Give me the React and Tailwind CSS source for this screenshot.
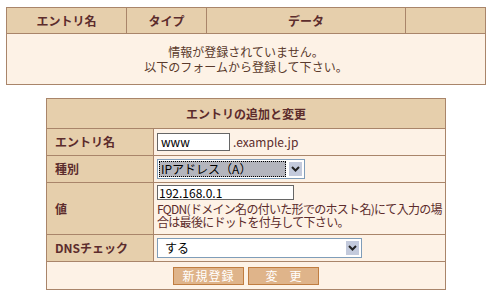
import React from "react";

const font = { fontFamily: '"Noto Sans CJK JP", "Liberation Sans", sans-serif' };

function Chevron() {
  return (
    <svg width="9" height="6" viewBox="0 0 9 6">
      <path d="M1 1 L4.5 4.5 L8 1" fill="none" stroke="#222" strokeWidth="2" />
    </svg>
  );
}

function SelectBox({ width, children, focused }) {
  return (
    <div
      className="flex h-[20px] items-stretch border border-[#7f9db9] bg-white"
      style={{ width }}
    >
      <div className="flex flex-1 items-center p-[1px]">
        {focused ? (
          <div className="flex h-full w-full items-center border border-dotted border-black bg-[#b4b5bd] pl-[1px] text-[12px] leading-none text-black">
            {children}
          </div>
        ) : (
          <div className="flex h-full w-full items-center pl-[6px] text-[12px] leading-none text-black">
            {children}
          </div>
        )}
      </div>
      <div className="m-[1px] flex w-[15px] items-center justify-center border border-white bg-[#c3cadc]">
        <Chevron />
      </div>
    </div>
  );
}

function Row({ label, height, children }) {
  return (
    <div className="flex border-b border-[#a9856a]" style={{ height }}>
      <div className="flex w-[107px] items-center border-r border-[#a9856a] bg-[#e6cfac] pl-[8px] text-[12px] font-bold text-[#5c2c2c]">
        {label}
      </div>
      <div className="flex-1 bg-[#fdf2e6]">{children}</div>
    </div>
  );
}

export default function App() {
  return (
    <div className="w-[495px] h-[300px] bg-white" style={font}>
      <div className="h-[7px]" />
      {/* Top list table */}
      <div className="ml-[6px] w-[480px] border border-[#a9856a]">
        <div className="flex h-[26px] border-b border-[#a9856a] bg-[#e6cfac] text-[12px] font-bold text-[#5c2c2c]">
          <div className="flex w-[120px] items-center justify-center border-r border-[#a9856a]">エントリ名</div>
          <div className="flex w-[80px] items-center justify-center border-r border-[#a9856a]">タイプ</div>
          <div className="flex w-[199px] items-center justify-center border-r border-[#a9856a]">データ</div>
          <div className="flex-1" />
        </div>
        <div className="flex h-[50px] flex-col items-center justify-center bg-[#fdf2e6] text-[12px] leading-[15px] text-[#5a3a2c]">
          <div>情報が登録されていません。</div>
          <div>以下のフォームから登録して下さい。</div>
        </div>
      </div>

      <div className="h-[13px]" />

      {/* Form table */}
      <div className="ml-[46px] w-[400px] border border-[#a9856a]">
        <div className="flex h-[30px] items-center justify-center border-b border-[#a9856a] bg-[#e6cfac] text-[12px] font-bold text-[#5c2c2c]">
          エントリの追加と変更
        </div>
        <Row label="エントリ名" height={27}>
          <div className="flex h-full items-center pl-[3px]">
            <div className="flex h-[18px] w-[73px] items-center border border-[#666] bg-white pl-[3px] text-[12px] leading-none text-black">
              www
            </div>
            <span className="ml-[3px] text-[12px] text-[#5c2c2c]">.example.jp</span>
          </div>
        </Row>
        <Row label="種別" height={27}>
          <div className="flex h-full items-center pl-[3px]">
            <SelectBox width={148} focused>
              IPアドレス（A）
            </SelectBox>
          </div>
        </Row>
        <Row label="値" height={52}>
          <div className="flex h-full flex-col pl-[3px] pt-[2px]">
            <div className="flex h-[15px] w-[137px] items-center border border-[#666] bg-white pl-[1px] text-[12px] leading-none text-black">
              192.168.0.1
            </div>
            <div className="mt-[2px] whitespace-nowrap text-[12px] leading-[13px] tracking-[-0.7px] text-[#5c2c2c]">
              FQDN(ドメイン名の付いた形でのホスト名)にて入力の場
              <br />
              合は最後にドットを付与して下さい。
            </div>
          </div>
        </Row>
        <Row label="DNSチェック" height={27}>
          <div className="flex h-full items-center pl-[3px]">
            <SelectBox width={205}>する</SelectBox>
          </div>
        </Row>
        <div className="flex h-[27px] items-center justify-center gap-[4px] bg-[#fdf2e6]">
          <button className="flex h-[18px] w-[71px] items-center justify-center border border-[#c07d40] bg-[#dfb48a] text-[12px] leading-none tracking-[1px] text-white">
            新規登録
          </button>
          <button className="flex h-[18px] w-[71px] items-center justify-center border border-[#c07d40] bg-[#dfb48a] text-[12px] leading-none text-white">
            変　更
          </button>
        </div>
      </div>
    </div>
  );
}
